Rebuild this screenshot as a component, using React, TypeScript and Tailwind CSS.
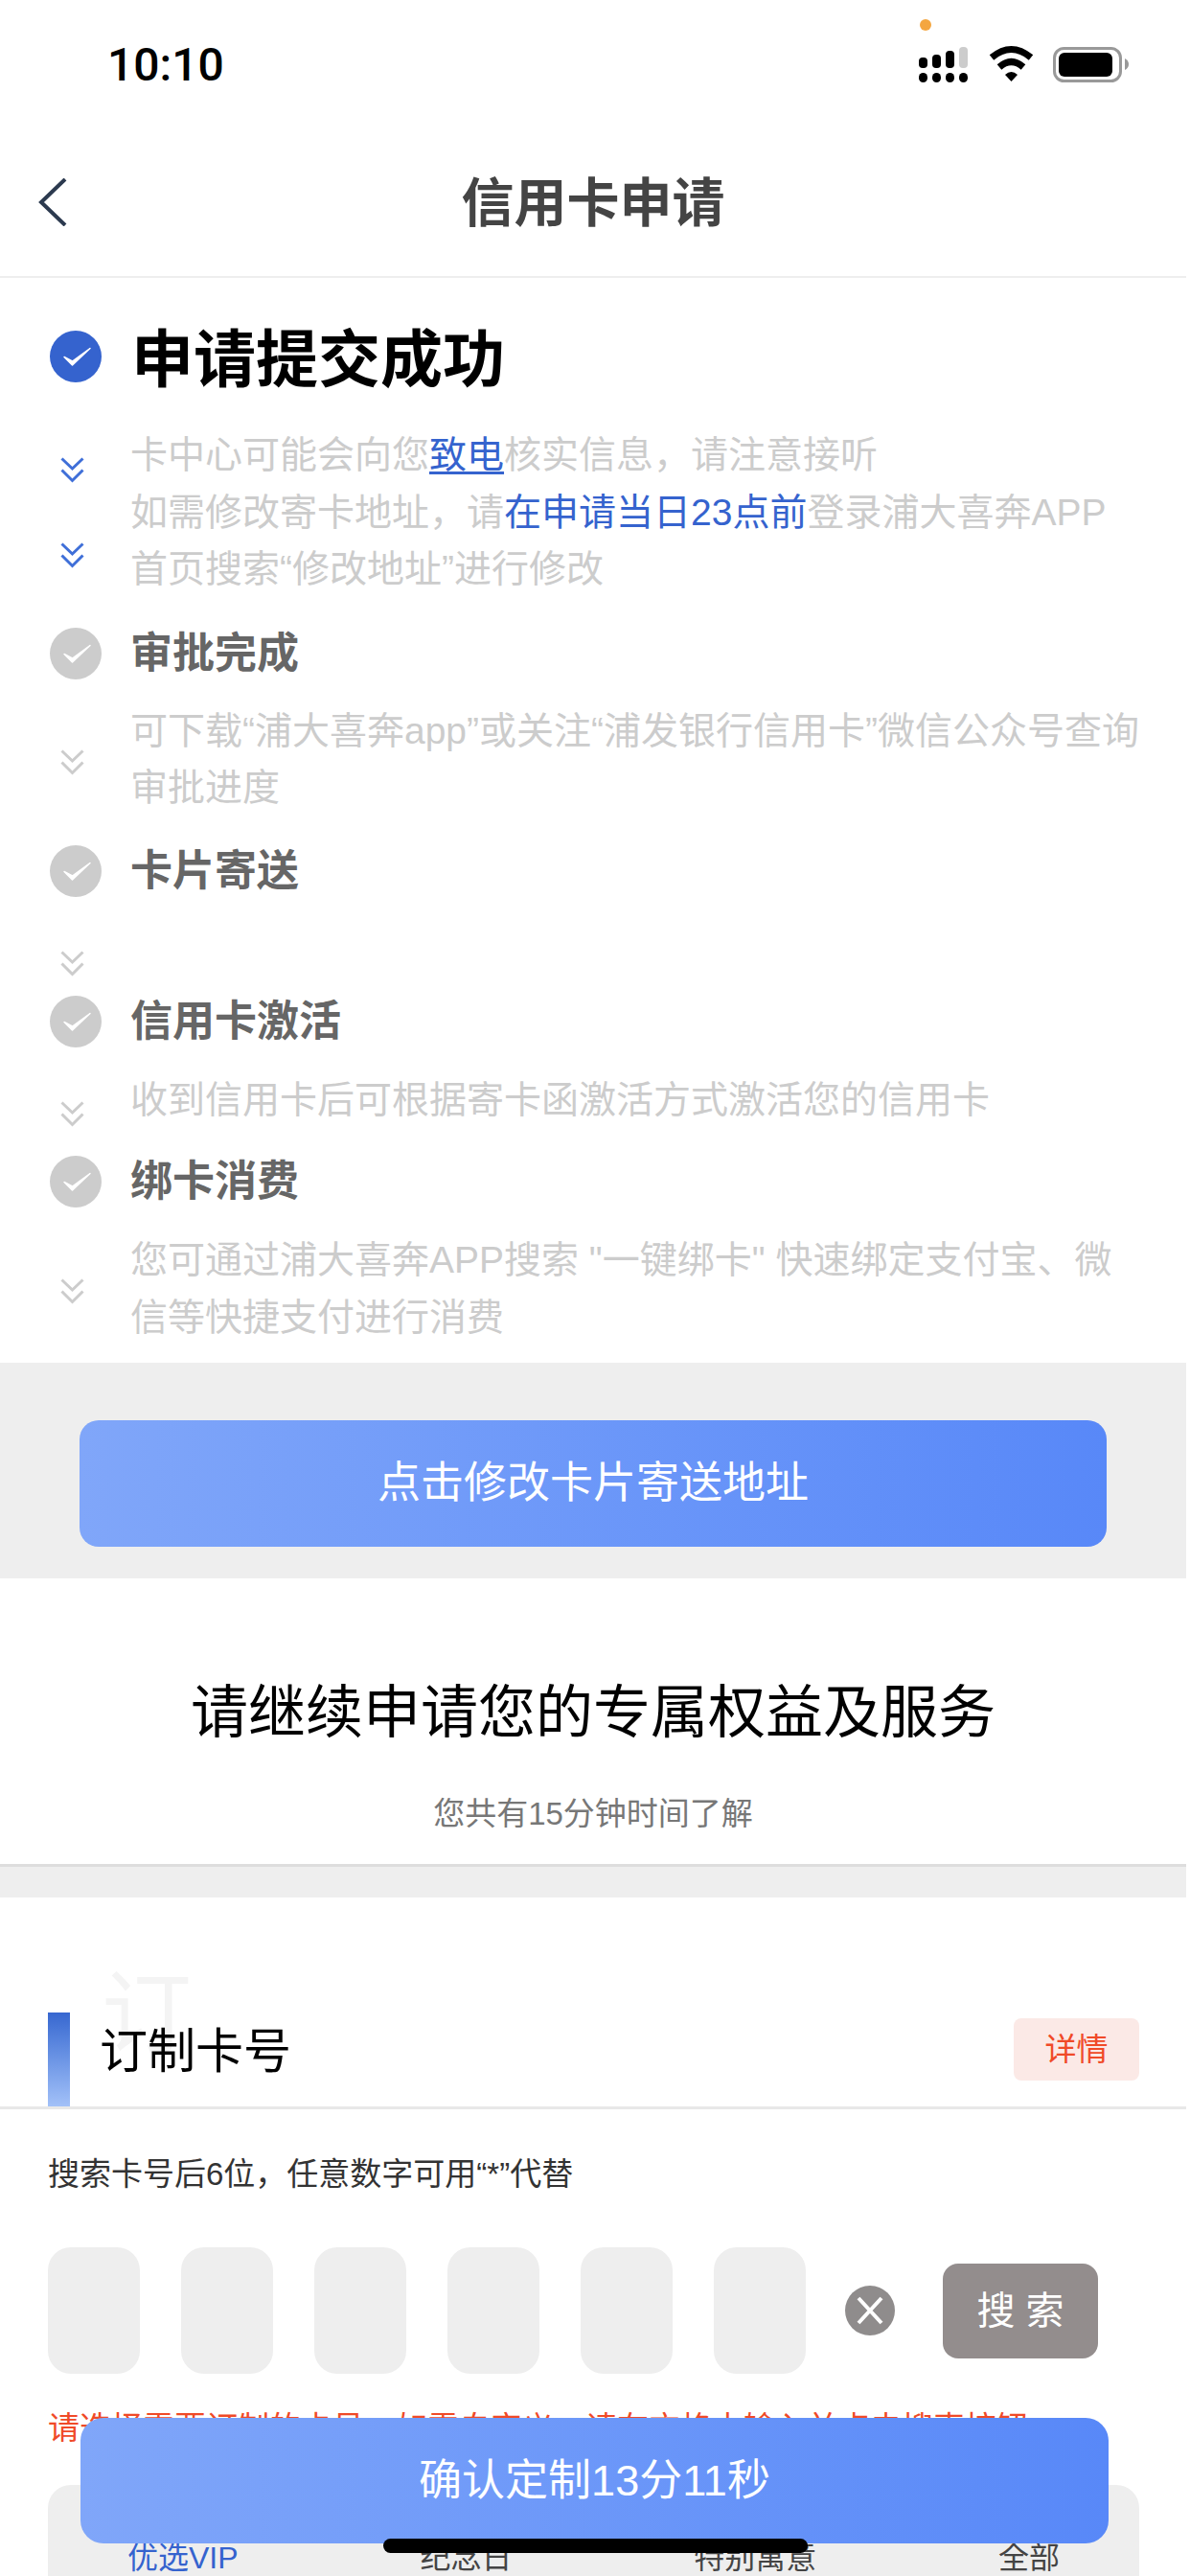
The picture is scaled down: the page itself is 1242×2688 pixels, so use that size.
import React from 'react';

const sans = "[font-family:'Liberation_Sans','Noto_Sans_CJK_SC',sans-serif]";

// round tick used by each step of the progress list
const StepDot = ({ active }: { active?: boolean }) => (
  <svg width="54" height="54" viewBox="0 0 54 54" className="shrink-0">
    <circle cx="27" cy="27" r="27" fill={active ? '#3563ce' : '#cccccc'} />
    <path d="M15 27.5 L23.5 36 L42 18.5 L23.5 32 Z" fill="#fff" stroke="#fff" strokeWidth="1.5" strokeLinejoin="round" />
  </svg>
);

const Chevrons = ({ active }: { active?: boolean }) => (
  <svg width="25" height="27" viewBox="0 0 25 27" fill="none" stroke={active ? '#3f6fd8' : '#cccccc'} strokeWidth="3">
    <path d="M1.5 1.5 L12.5 12 L23.5 1.5" />
    <path d="M1.5 13.5 L12.5 24.5 L23.5 13.5" />
  </svg>
);

const StepTitle = ({ title, className }: { title: string; className: string }) => (
  <div className={`flex items-center h-[54px] ${className}`}>
    <StepDot />
    <span className="ml-[30px] text-[44px] leading-[54px] font-bold text-[#666666]">{title}</span>
  </div>
);

const StatusIcons = () => (
  <svg width="240" height="100" viewBox="950 0 240 100">
    <circle cx="966" cy="26" r="6" fill="#f4a640" />
    <rect x="959" y="60" width="9" height="11" rx="4" />
    <rect x="973" y="57" width="9" height="14" rx="4" />
    <rect x="987" y="53" width="9" height="18" rx="4" />
    <rect x="1001" y="49" width="9" height="22" rx="4" fill="#cccccc" />
    <rect x="959" y="76" width="9" height="10" rx="4.5" />
    <rect x="973" y="76" width="9" height="10" rx="4.5" />
    <rect x="987" y="76" width="9" height="10" rx="4.5" />
    <rect x="1001" y="76" width="9" height="10" rx="4.5" />
    <path d="M1035 60 Q1055.5 43 1076 60" fill="none" stroke="#000" strokeWidth="7" />
    <path d="M1043 70 Q1055.5 59 1068 70" fill="none" stroke="#000" strokeWidth="7" />
    <path d="M1049 78 Q1055.5 72 1062 78 L1055.5 85 Z" />
    <rect x="1100.5" y="50.5" width="69" height="34" rx="10" fill="none" stroke="#999999" strokeWidth="3" />
    <rect x="1105" y="55" width="56" height="25" rx="6" />
    <path d="M1174 61 Q1178 63 1178 67 Q1178 71 1174 73 Z" fill="#999999" />
  </svg>
);

const App = () => {
  const tabs = ['优选VIP', '纪念日', '特别寓意', '全部'];
  const boxes = [0, 1, 2, 3, 4, 5];

  return (
    <div className={`relative w-[1242px] h-[2688px] overflow-hidden bg-white ${sans}`}>
      <div className="w-[1238px]">
        {/* Status bar */}
        <div className="flex justify-between h-[132px] pl-[112px] pr-[48px]">
          <span className="mt-[44px] text-[48px] leading-[48px] font-medium text-black [font-family:Roboto,sans-serif]">10:10</span>
          <StatusIcons />
        </div>

        {/* Nav */}
        <div className="grid grid-cols-[1fr_auto_1fr] items-center h-[158px] pl-[40px] pr-[40px] border-b-2 border-[#eeeeee]">
          <svg width="30" height="50" viewBox="0 0 30 50" fill="none" stroke="#2c3a4f" strokeWidth="4" className="mt-[2px]">
            <path d="M28 1 L3 25 L28 49" />
          </svg>
          <span className="mt-[4px] text-[55px] leading-[60px] font-bold text-[#444444]">信用卡申请</span>
          <span />
        </div>

        {/* Progress */}
        <div className="pl-[52px] pr-[40px] pt-[55px] pb-[18px] text-[39px] leading-[59.5px] text-[#cccccc]">
          <div className="flex items-center h-[54px]">
            <StepDot active />
            <span className="ml-[31px] mt-[8px] text-[65px] leading-[54px] font-bold text-black">申请提交成功</span>
          </div>

          <div className="flex mt-[46px]">
            <div className="w-[84px] pl-[11px] pt-[32px] flex flex-col gap-[62px]">
              <Chevrons active />
              <Chevrons active />
            </div>
            <div>
              <p>卡中心可能会向您<span className="text-[#3563ce] underline underline-offset-4">致电</span>核实信息，请注意接听</p>
              <p>如需修改寄卡地址，请<span className="text-[#3563ce]">在申请当日23点前</span>登录浦大喜奔APP</p>
              <p>首页搜索“修改地址”进行修改</p>
            </div>
          </div>

          <StepTitle title="审批完成" className="mt-[31px]" />
          <div className="flex mt-[24px]">
            <div className="w-[84px] pl-[11px] pt-[49px]"><Chevrons /></div>
            <div>
              <p>可下载“浦大喜奔app”或关注“浦发银行信用卡”微信公众号查询</p>
              <p>审批进度</p>
            </div>
          </div>

          <StepTitle title="卡片寄送" className="mt-[30px]" />
          <div className="h-[103px] pl-[11px] pt-[56px]"><Chevrons /></div>

          <StepTitle title="信用卡激活" className="" />
          <div className="flex mt-[25px]">
            <div className="w-[84px] pl-[11px] pt-[31px]"><Chevrons /></div>
            <p>收到信用卡后可根据寄卡函激活方式激活您的信用卡</p>
          </div>

          <StepTitle title="绑卡消费" className="mt-[29px]" />
          <div className="flex mt-[25px]">
            <div className="w-[84px] pl-[11px] pt-[49px]"><Chevrons /></div>
            <div>
              <p>您可通过浦大喜奔APP搜索 "一键绑卡" 快速绑定支付宝、微</p>
              <p>信等快捷支付进行消费</p>
            </div>
          </div>
        </div>

        {/* Address button */}
        <div className="bg-[#eeeeee] pt-[60px] pb-[33px] px-[83px]">
          <div className="flex items-center justify-center h-[132px] rounded-[20px] bg-gradient-to-r from-[#80a6f9] to-[#5888f8] text-[45px] text-white">
            点击修改卡片寄送地址
          </div>
        </div>

        {/* Continue heading */}
        <div className="pt-[101px] pb-[27px] text-center border-b-[3px] border-[#dddddd]">
          <p className="text-[60px] leading-[80px] text-black">请继续申请您的专属权益及服务</p>
          <p className="mt-[40px] text-[33px] leading-[50px] text-[#777777]">您共有15分钟时间了解</p>
        </div>
        <div className="h-[32px] bg-[#eeeeee]" />

        {/* Custom card number */}
        <div className="flex items-end justify-between h-[218px] pl-[50px] pr-[49px]">
          <div className="flex items-end">
            <div className="w-[23px] h-[98px] bg-gradient-to-b from-[#3767d0] to-[#a3c1f8]" />
            <div className="relative ml-[31px] mb-[32px]">
              <span className="absolute left-[2px] top-[-60px] text-[94px] leading-[94px] text-[#f4f4f4]">订</span>
              <span className="relative block text-[50px] leading-[50px] text-black">订制卡号</span>
            </div>
          </div>
          <div className="flex items-center justify-center w-[131px] h-[65px] mb-[27px] rounded-[8px] bg-[#fbe9e6] text-[33px] text-[#f04a28]">
            详情
          </div>
        </div>
        <div className="h-[3px] bg-[#e8e8e8]" />

        <div className="pt-[48px]">
          <p className="px-[50px] text-[33px] leading-[40px] text-[#333333]">搜索卡号后6位，任意数字可用“*”代替</p>

          <div className="flex items-center mt-[56px] pl-[50px]">
            <div className="flex gap-[43px]">
              {boxes.map((b) => (
                <div key={b} className="w-[96px] h-[132px] rounded-[24px] bg-[#eeeeee]" />
              ))}
            </div>
            <svg width="52" height="52" viewBox="0 0 52 52" className="ml-[41px]">
              <circle cx="26" cy="26" r="26" fill="#8f8c8c" />
              <path d="M14 13 L38 39 M38 13 L14 39" stroke="#fff" strokeWidth="4" />
            </svg>
            <div className="flex items-center justify-center ml-[50px] w-[162px] h-[99px] rounded-[16px] bg-[#938d8d] text-[40px] text-white">
              搜 索
            </div>
          </div>

          <p className="mt-[37px] px-[50px] text-[33px] leading-[40px] text-[#f04a28] whitespace-nowrap">
            请选择需要订制的卡号，如需自定义，请在方格中输入并点击搜索按钮
          </p>

          <div className="flex justify-between ml-[50px] mr-[49px] mt-[39px] h-[140px] px-[83px] pt-[56px] rounded-t-[24px] bg-[#eeeeee] text-[32px] leading-[40px] text-[#444444]">
            {tabs.map((t, i) => (
              <span key={t} className={i === 0 ? 'text-[#3563ce]' : ''}>{t}</span>
            ))}
          </div>
        </div>
      </div>

      {/* Floating confirm button */}
      <div className="absolute left-[84px] top-[2523px] flex items-center justify-center w-[1073px] h-[131px] rounded-[24px] bg-gradient-to-r from-[#80a6f9] to-[#5888f8] text-[45px] text-white">
        确认定制13分11秒
      </div>
      {/* Home indicator */}
      <div className="absolute left-[400px] top-[2649px] w-[443px] h-[15px] rounded-full bg-black" />
    </div>
  );
};

export default App;
